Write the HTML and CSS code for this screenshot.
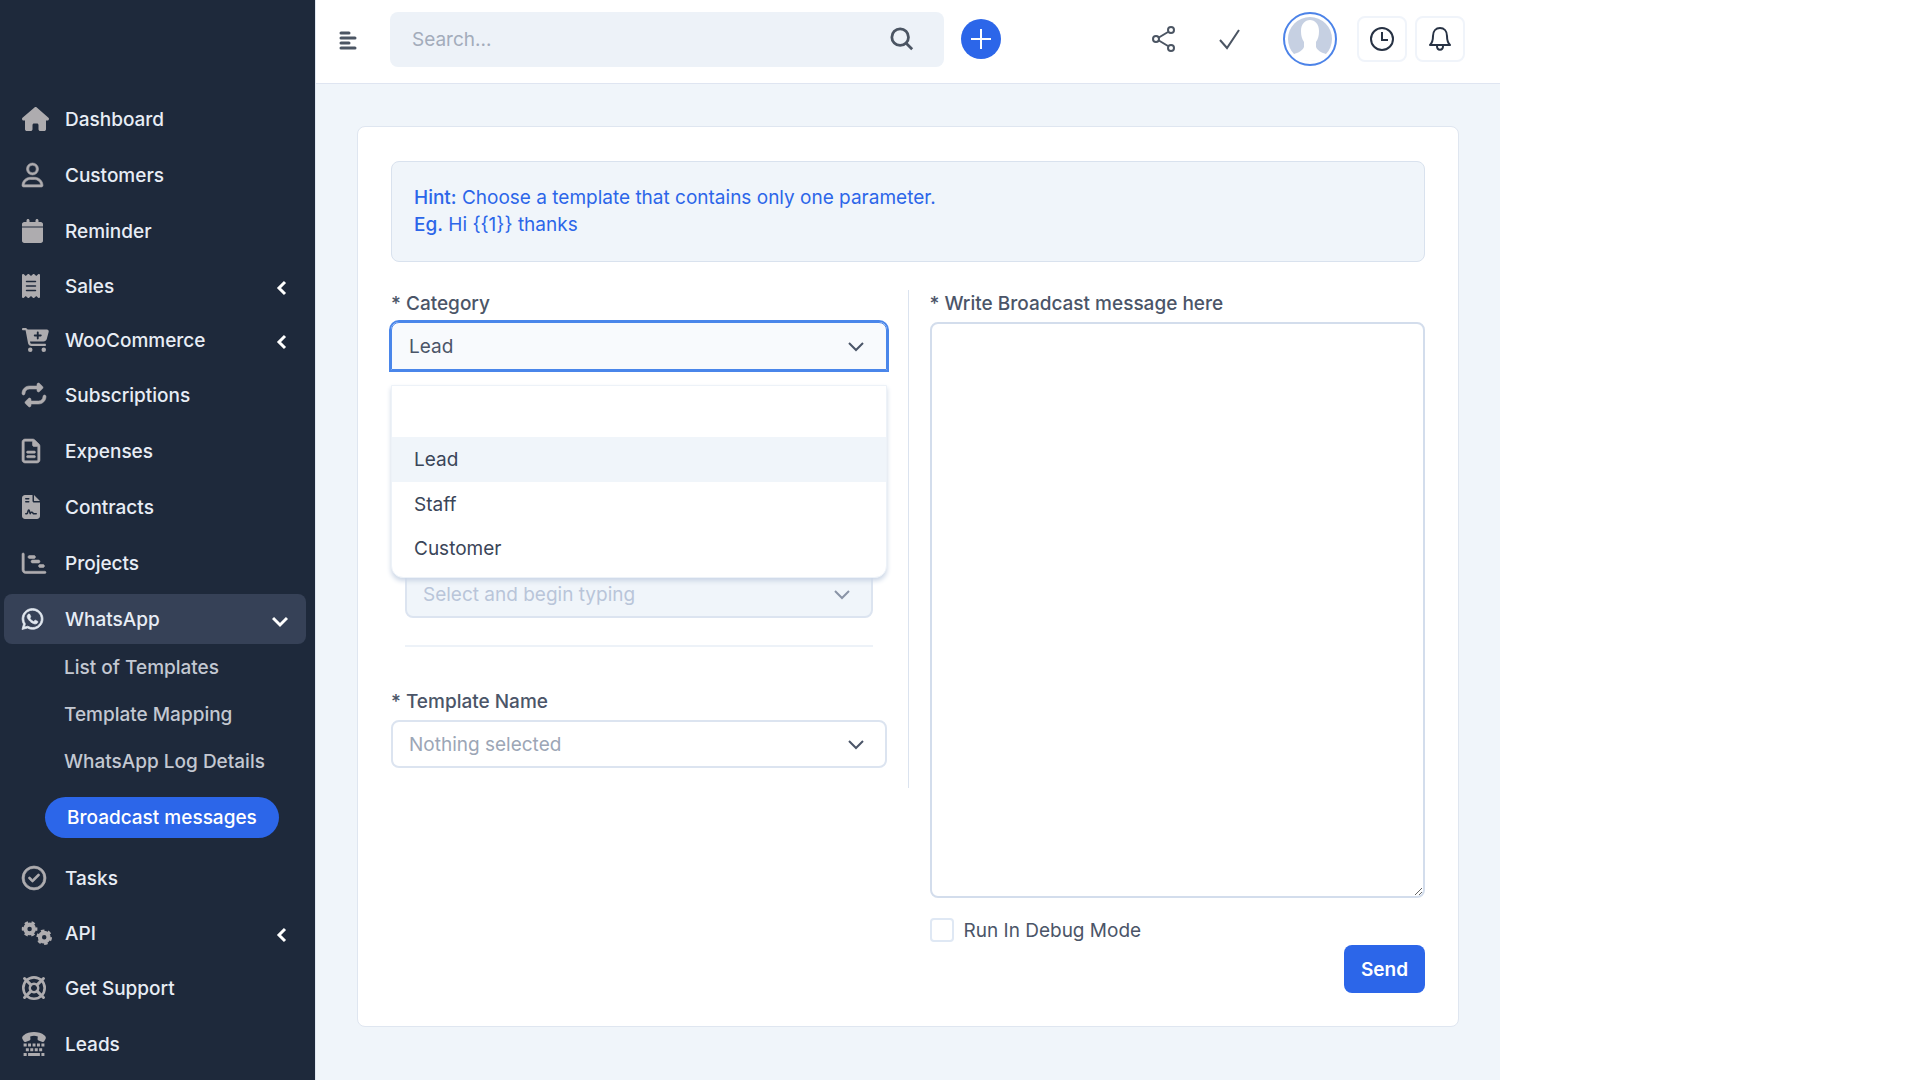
FILE: index.html
```html
<!DOCTYPE html>
<html lang="en">
<head>
<meta charset="utf-8">
<meta name="viewport" content="width=device-width, initial-scale=1">
<title>Broadcast messages</title>
<link rel="stylesheet" href="styles.css">
</head>
<body>
<div class="app">
  <aside class="sidebar">
    <nav aria-label="Main">
      <ul class="menu">
        <li><a class="menu-link" href="#"><svg class="menu-icon" viewBox="0 0 576 512"><path d="M575.8 255.5c0 18-15 32.1-32 32.1h-32l.7 160.2c0 2.7-.2 5.4-.5 8.1V472c0 22.1-17.9 40-40 40H456c-1.1 0-2.2 0-3.3-.1c-1.4 .1-2.8 .1-4.2 .1H416 392c-22.1 0-40-17.9-40-40V448 384c0-17.7-14.3-32-32-32H256c-17.7 0-32 14.3-32 32v64 24c0 22.1-17.9 40-40 40H160 128.1c-1.5 0-3-.1-4.5-.2c-1.2 .1-2.4 .2-3.6 .2H104c-22.1 0-40-17.9-40-40V360c0-.9 0-1.9 .1-2.8V287.6H32c-18 0-32-14-32-32.1c0-9 3-17 10-24L266.4 8c7-7 15-8 22-8s15 2 21 7L564.8 231.5c8 7 12 15 11 24z"/></svg><span>Dashboard</span></a></li>
        <li><a class="menu-link" href="#"><svg class="menu-icon" viewBox="0 0 448 512"><path stroke="currentColor" stroke-width="12" d="M304 128a80 80 0 1 0 -160 0 80 80 0 1 0 160 0zM96 128a128 128 0 1 1 256 0A128 128 0 1 1 96 128zM49.3 464H398.7c-8.9-63.3-63.3-112-129-112H178.3c-65.7 0-120.1 48.7-129 112zM0 482.3C0 383.8 79.8 304 178.3 304h91.4C368.2 304 448 383.8 448 482.3c0 16.4-13.3 29.7-29.7 29.7H29.7C13.3 512 0 498.7 0 482.3z"/></svg><span>Customers</span></a></li>
        <li><a class="menu-link" href="#"><svg class="menu-icon" viewBox="0 0 448 512"><path d="M96 32V64H48C21.5 64 0 85.5 0 112v48H448V112c0-26.5-21.5-48-48-48H352V32c0-17.7-14.3-32-32-32s-32 14.3-32 32V64H160V32c0-17.7-14.3-32-32-32S96 14.3 96 32zM448 180H0V464c0 26.5 21.5 48 48 48H400c26.5 0 48-21.5 48-48V180z"/></svg><span>Reminder</span></a></li>
        <li><a class="menu-link has-children" href="#"><svg class="menu-icon" viewBox="0 0 384 512"><path d="M14 2.2C22.5-1.7 32.5-.3 39.6 5.8L80 40.4 120.4 5.8c9-7.7 22.3-7.7 31.2 0L192 40.4 232.4 5.8c9-7.7 22.3-7.7 31.2 0L304 40.4 344.4 5.8c7.1-6.1 17.1-7.5 25.6-3.6s14 12.4 14 21.8V488c0 9.4-5.5 17.9-14 21.8s-18.5 2.5-25.6-3.6L304 471.6l-40.4 34.6c-9 7.7-22.3 7.7-31.2 0L192 471.6l-40.4 34.6c-9 7.7-22.3 7.7-31.2 0L80 471.6 39.6 506.2c-7.1 6.1-17.1 7.5-25.6 3.6S0 497.4 0 488V24C0 14.6 5.5 6.1 14 2.2zM96 144c-8.8 0-16 7.2-16 16s7.2 16 16 16H288c8.8 0 16-7.2 16-16s-7.2-16-16-16H96zM80 352c0 8.8 7.2 16 16 16H288c8.8 0 16-7.2 16-16s-7.2-16-16-16H96c-8.8 0-16 7.2-16 16zM96 240c-8.8 0-16 7.2-16 16s7.2 16 16 16H288c8.8 0 16-7.2 16-16s-7.2-16-16-16H96z"/></svg><span>Sales</span><svg class="arrow" viewBox="0 0 16 16"><path d="M11 2L5 8l6 6"/></svg></a></li>
        <li><a class="menu-link has-children" href="#"><svg class="menu-icon" viewBox="0 0 576 512"><path d="M0 24C0 10.7 10.7 0 24 0H69.5c22 0 41.5 12.8 50.6 32h411c26.3 0 45.5 25 38.6 50.4l-41 152.3c-8.5 31.4-37 53.3-69.5 53.3H170.7l5.4 28.5c2.2 11.3 12.1 19.5 23.6 19.5H488c13.3 0 24 10.7 24 24s-10.7 24-24 24H199.7c-34.6 0-64.3-24.6-70.7-58.5L77.4 54.5c-.7-3.8-4-6.5-7.9-6.5H24C10.7 48 0 37.3 0 24zM128 464a48 48 0 1 1 96 0 48 48 0 1 1 -96 0zm336-48a48 48 0 1 1 0 96 48 48 0 1 1 0-96zM252 160c0 11 9 20 20 20h44v44c0 11 9 20 20 20s20-9 20-20V180h44c11 0 20-9 20-20s-9-20-20-20H356V96c0-11-9-20-20-20s-20 9-20 20v44H272c-11 0-20 9-20 20z"/></svg><span>WooCommerce</span><svg class="arrow" viewBox="0 0 16 16"><path d="M11 2L5 8l6 6"/></svg></a></li>
        <li><a class="menu-link" href="#"><svg class="menu-icon" viewBox="0 0 512 512"><path stroke="currentColor" stroke-width="12" d="M0 224c0 17.7 14.3 32 32 32s32-14.3 32-32c0-53 43-96 96-96H320v32c0 12.9 7.8 24.6 19.8 29.6s25.7 2.2 34.9-6.9l64-64c12.5-12.5 12.5-32.8 0-45.3l-64-64c-9.2-9.2-22.9-11.9-34.9-6.9S320 19.1 320 32V64H160C71.6 64 0 135.6 0 224zm512 64c0-17.7-14.3-32-32-32s-32 14.3-32 32c0 53-43 96-96 96H192V352c0-12.9-7.8-24.6-19.8-29.6s-25.7-2.2-34.9 6.9l-64 64c-12.5 12.5-12.5 32.8 0 45.3l64 64c9.2 9.2 22.9 11.9 34.9 6.9s19.8-16.6 19.8-29.6V448H352c88.4 0 160-71.6 160-160z"/></svg><span>Subscriptions</span></a></li>
        <li><a class="menu-link" href="#"><svg class="menu-icon" viewBox="0 0 384 512"><path stroke="currentColor" stroke-width="12" d="M64 464c-8.8 0-16-7.2-16-16V64c0-8.8 7.2-16 16-16H224v80c0 17.7 14.3 32 32 32h80V448c0 8.8-7.2 16-16 16H64zM64 0C28.7 0 0 28.7 0 64V448c0 35.3 28.7 64 64 64H320c35.3 0 64-28.7 64-64V154.5c0-17-6.7-33.3-18.7-45.3L274.7 18.7C262.7 6.7 246.5 0 229.5 0H64zm56 256c-13.3 0-24 10.7-24 24s10.7 24 24 24H264c13.3 0 24-10.7 24-24s-10.7-24-24-24H120zm0 96c-13.3 0-24 10.7-24 24s10.7 24 24 24H264c13.3 0 24-10.7 24-24s-10.7-24-24-24H120z"/></svg><span>Expenses</span></a></li>
        <li><a class="menu-link" href="#"><svg class="menu-icon" viewBox="0 0 384 512"><path d="M64 0C28.7 0 0 28.7 0 64V448c0 35.3 28.7 64 64 64H320c35.3 0 64-28.7 64-64V160H256c-17.7 0-32-14.3-32-32V0H64zM256 0V128H384L256 0zM80 64h64c8.8 0 16 7.2 16 16s-7.2 16-16 16H80c-8.8 0-16-7.2-16-16s7.2-16 16-16zm0 64h64c8.8 0 16 7.2 16 16s-7.2 16-16 16H80c-8.8 0-16-7.2-16-16s7.2-16 16-16zm54.2 253.8c-6.1 20.3-24.8 34.2-46 34.2H80c-8.8 0-16-7.2-16-16s7.2-16 16-16h8.2c7.1 0 13.3-4.6 15.3-11.4l14.9-49.5c3.4-11.3 13.8-19.1 25.6-19.1s22.2 7.7 25.6 19.1l11.6 38.6c7.4-6.2 16.8-9.7 26.8-9.7c15.9 0 30.4 9 37.5 23.2l4.4 8.8H304c8.8 0 16 7.2 16 16s-7.2 16-16 16H240c-6.1 0-11.6-3.4-14.3-8.8l-8.8-17.7c-1.7-3.4-5.1-5.5-8.8-5.5s-7.2 2.1-8.8 5.5l-8.8 17.7c-2.9 5.9-9.2 9.4-15.7 8.8s-12.1-5.1-13.9-11.3L144 349l-9.8 32.8z"/></svg><span>Contracts</span></a></li>
        <li><a class="menu-link" href="#"><svg class="menu-icon" viewBox="0 0 512 512"><path stroke="currentColor" stroke-width="12" d="M24 40c13 0 24 11 24 24V400c0 18 14 32 32 32H488c13 0 24 11 24 24s-11 24-24 24H80c-44.2 0-80-35.8-80-80V64C0 51 11 40 24 40zM128 128c0-17.7 14.3-32 32-32h96c17.7 0 32 14.3 32 32s-14.3 32-32 32H160c-17.7 0-32-14.3-32-32zm96 64H352c17.7 0 32 14.3 32 32s-14.3 32-32 32H224c-17.7 0-32-14.3-32-32s14.3-32 32-32zm160 96h64c17.7 0 32 14.3 32 32s-14.3 32-32 32H384c-17.7 0-32-14.3-32-32s14.3-32 32-32z"/></svg><span>Projects</span></a></li>
        <li>
          <a class="menu-link is-open" href="#" aria-expanded="true"><svg class="menu-icon" viewBox="0 0 448 512"><path stroke="currentColor" stroke-width="16" d="M380.9 97.1C339 55.1 283.2 32 223.9 32c-122.4 0-222 99.6-222 222 0 39.1 10.2 77.3 29.6 111L0 480l117.7-30.9c32.4 17.7 68.9 27 106.1 27h.1c122.3 0 224.1-99.6 224.1-222 0-59.3-25.2-115-67.1-157zm-157 341.6c-33.2 0-65.7-8.9-94-25.7l-6.7-4-69.8 18.3L72 359.2l-4.4-7c-18.5-29.4-28.2-63.3-28.2-98.2 0-101.7 82.8-184.5 184.6-184.5 49.3 0 95.6 19.2 130.4 54.1 34.8 34.9 56.2 81.2 56.1 130.5 0 101.8-84.9 184.6-186.6 184.6zm101.2-138.2c-5.5-2.8-32.8-16.2-37.9-18-5.1-1.9-8.8-2.8-12.5 2.8-3.7 5.6-14.3 18-17.6 21.8-3.2 3.7-6.5 4.2-12 1.4-32.6-16.3-54-29.1-75.5-66-5.7-9.8 5.7-9.1 16.3-30.3 1.8-3.7.9-6.9-.5-9.7-1.4-2.8-12.5-30.1-17.1-41.2-4.5-10.8-9.1-9.3-12.5-9.5-3.2-.2-6.9-.2-10.6-.2-3.7 0-9.7 1.4-14.8 6.9-5.1 5.6-19.4 19-19.4 46.3 0 27.3 19.9 53.7 22.6 57.4 2.8 3.7 39.1 59.7 94.8 83.8 35.2 15.2 49 16.5 66.6 13.9 10.7-1.6 32.8-13.4 37.4-26.4 4.6-13 4.6-24.1 3.2-26.4-1.3-2.5-5-3.9-10.5-6.6z"/></svg><span>WhatsApp</span><svg class="arrow" viewBox="0 0 16 16"><path d="M1 5l7 7 7-7"/></svg></a>
          <ul class="submenu">
            <li><a class="sub-link" href="#">List of Templates</a></li>
            <li><a class="sub-link" href="#">Template Mapping</a></li>
            <li><a class="sub-link" href="#">WhatsApp Log Details</a></li>
            <li><a class="sub-link is-current" href="#" aria-current="page">Broadcast messages</a></li>
          </ul>
        </li>
        <li><a class="menu-link" href="#"><svg class="menu-icon" viewBox="0 0 512 512"><path stroke="currentColor" stroke-width="14" d="M256 48a208 208 0 1 1 0 416 208 208 0 1 1 0-416zm0 464A256 256 0 1 0 256 0a256 256 0 1 0 0 512zM369 209c9.4-9.4 9.4-24.6 0-33.9s-24.6-9.4-33.9 0l-111 111-47-47c-9.4-9.4-24.6-9.4-33.9 0s-9.4 24.6 0 33.9l64 64c9.4 9.4 24.6 9.4 33.9 0L369 209z"/></svg><span>Tasks</span></a></li>
        <li><a class="menu-link has-children" href="#"><svg class="menu-icon" viewBox="0 0 640 512"><g fill="none" stroke="currentColor"><circle cx="162" cy="168" r="92" stroke-width="88"/><circle cx="162" cy="168" r="140" stroke-width="54" pathLength="12" stroke-dasharray="1 1" stroke-dashoffset="0.5"/><circle cx="474" cy="346" r="92" stroke-width="88"/><circle cx="474" cy="346" r="140" stroke-width="54" pathLength="12" stroke-dasharray="1 1"/></g></svg><span>API</span><svg class="arrow" viewBox="0 0 16 16"><path d="M11 2L5 8l6 6"/></svg></a></li>
        <li><a class="menu-link" href="#"><svg class="menu-icon" viewBox="0 0 512 512"><g fill="none" stroke="currentColor"><circle cx="256" cy="256" r="228" stroke-width="56"/><circle cx="256" cy="256" r="90" stroke-width="52"/><path stroke-width="64" stroke-linecap="round" d="M54 54l136 136M458 54L322 190M54 458l136-136M458 458L322 322"/></g></svg><span>Get Support</span></a></li>
        <li><a class="menu-link" href="#"><svg class="menu-icon" viewBox="0 0 512 512"><path d="M38 198L10 150C-6 120 6 92 30 72C155-22 357-22 482 72c24 20 36 48 20 78l-28 48c-8 14-22 19-37 14l-84-32c-14-6-22-18-21-32l5-52c-50-18-112-18-162 0l5 52c1 14-7 26-21 32l-84 32c-15 5-29 0-37-14z"/><path d="M34 246h66v64H34zM130 246h62v64h-62zM226 246h62v64h-62zM320 246h62v64h-62zM414 246h64v64h-64zM82 348h64v64H82zM176 348h64v64h-64zM272 348h64v64h-64zM366 348h64v64h-64zM34 450h66v62H34zM130 450h252v62H130zM414 450h64v62h-64z"/></svg><span>Leads</span></a></li>
      </ul>
    </nav>
  </aside>

  <div class="page">
    <header class="topbar">
      <button class="plain-btn menu-toggle" type="button" aria-label="Toggle menu"><svg width="18" height="20" viewBox="0 0 18 20"><path d="M2 2h8M2 7h14M2 12h8M2 17h14" fill="none" stroke="#4b5563" stroke-width="3" stroke-linecap="round"/></svg></button>
      <form class="search" role="search">
        <input class="search-input" type="search" placeholder="Search..." aria-label="Search">
        <button class="plain-btn" type="button" aria-label="Search"><svg width="24" height="24" viewBox="0 0 26 26"><g fill="none" stroke="#4b5563" stroke-width="3"><circle cx="11" cy="11" r="9"/><path d="M17 17l7 7"/></g></svg></button>
      </form>
      <button class="add-btn" type="button" aria-label="Add"><svg width="20" height="20" viewBox="0 0 20 20"><path d="M10 0v20M0 10h20" stroke="#fff" stroke-width="2"/></svg></button>
      <div class="tools">
        <button class="plain-btn tool" type="button" aria-label="Share"><svg width="26" height="28" viewBox="0 0 26 28"><g fill="none" stroke="#4b5563" stroke-width="2"><circle cx="5" cy="14" r="3"/><circle cx="20" cy="5" r="3"/><circle cx="20" cy="23" r="3"/><path d="M7 13L17 7M7 15l10 6"/></g></svg></button>
        <button class="plain-btn tool" type="button" aria-label="To do"><svg width="22" height="22" viewBox="0 0 22 22"><path d="M1 12l7 8L20 2" fill="none" stroke="#4b5563" stroke-width="2"/></svg></button>
        <button class="plain-btn avatar" type="button" aria-label="Profile"><svg width="54" height="54" viewBox="0 0 54 54"><circle cx="27" cy="27" r="26" fill="#fff" stroke="#4c83e8" stroke-width="2"/><circle cx="27" cy="27" r="22" fill="#c6d0e2"/><path d="M18 19c0-7 4-11 9-11s9 4 9 11c0 5-1 8-3 11v5c2 5 8 6 12 8-5 4-11 6-18 6s-13-2-18-6c4-2 10-3 12-8v-5c-2-3-3-6-3-11z" fill="#fff"/></svg></button>
        <button class="box-btn" type="button" aria-label="Timers"><svg width="24" height="24" viewBox="0 0 24 24"><g fill="none" stroke="#273244" stroke-width="2"><circle cx="12" cy="12" r="11"/><path d="M12 5v8h6"/></g></svg></button>
        <button class="box-btn" type="button" aria-label="Notifications"><svg width="24" height="26" viewBox="0 0 24 26"><g fill="none" stroke="#273244" stroke-width="2" stroke-linejoin="round"><path d="M2 19c3-3 3-6 3-9 0-5 3-8 7-8s7 3 7 8c0 3 0 6 3 9z"/><path d="M9 20c0 5 6 5 6 0"/></g></svg></button>
      </div>
    </header>

    <main class="content">
      <form class="card">
        <div class="hint">
          <strong>Hint:</strong> Choose a template that contains only one parameter.<br>
          <strong>Eg.</strong> Hi {{1}} thanks
        </div>
        <div class="columns">
          <div class="left">
            <div class="fields">
              <div class="field">
                <label for="category">* Category</label>
                <div class="select-box is-focused">
                  <select id="category"><option>Lead</option><option>Staff</option><option>Customer</option></select>
                  <svg class="caret" viewBox="0 0 16 10"><path d="M1 1l7 7 7-7"/></svg>
                  <ul class="options">
                    <li class="blank"><button type="button" aria-label="None"></button></li>
                    <li><button class="is-active" type="button">Lead</button></li>
                    <li><button type="button">Staff</button></li>
                    <li><button type="button">Customer</button></li>
                  </ul>
                </div>
              </div>
              <div class="recipients">
                <div class="select-box">
                  <select aria-label="Recipients" disabled><option>Select and begin typing</option></select>
                  <svg class="caret" viewBox="0 0 16 10"><path d="M1 1l7 7 7-7"/></svg>
                </div>
              </div>
              <div class="field">
                <label for="template">* Template Name</label>
                <div class="select-box is-empty">
                  <select id="template"><option>Nothing selected</option></select>
                  <svg class="caret" viewBox="0 0 16 10"><path d="M1 1l7 7 7-7"/></svg>
                </div>
              </div>
            </div>
          </div>
          <div class="right">
            <div class="field">
              <label for="message">* Write Broadcast message here</label>
              <textarea id="message" rows="20"></textarea>
            </div>
            <div class="debug"><input id="debug" type="checkbox"><label for="debug">Run In Debug Mode</label></div>
            <button class="send" type="submit">Send</button>
          </div>
        </div>
      </form>
    </main>
  </div>
</div>
</body>
</html>
```
FILE: styles.css
```css
* {
  box-sizing: border-box;
}

body {
  margin: 0;
  background: #fff;
  color: #4b5568;
  font: 400 19px/27px Inter, "Liberation Sans", sans-serif;
}

ul {
  margin: 0;
  padding: 0;
  list-style: none;
}

a {
  color: inherit;
  text-decoration: none;
}

button,
input,
select,
textarea {
  font: inherit;
  color: inherit;
}

svg {
  display: block;
}

.app {
  display: flex;
  min-height: 100vh;
  margin-right: 420px;
}

/* Sidebar */
.sidebar {
  flex: none;
  width: 315px;
  padding: 94px 9px 0 4px;
  background: #1e293b;
  color: #e8edf5;
}

.menu {
  display: flex;
  flex-direction: column;
  gap: 6px;
}

.menu-link {
  display: grid;
  grid-template-columns: 43px 1fr auto;
  align-items: center;
  height: 50px;
  padding: 0 18px;
  border-radius: 8px;
  font-weight: 500;
}

.menu-link.has-children {
  height: 48px;
  padding-right: 16px;
}

.menu-link.is-open {
  background: #364157;
}

.menu-icon {
  height: 24px;
  overflow: visible;
  fill: currentColor;
  color: #aeacaf;
}

.is-open .menu-icon {
  color: #e2e8f0;
}

.arrow {
  width: 16px;
  height: 16px;
  margin-top: 3px;
  fill: none;
  stroke: #fff;
  stroke-width: 3;
}

.submenu {
  display: flex;
  flex-direction: column;
  align-items: flex-start;
  padding-bottom: 9px;
}

.sub-link {
  display: block;
  padding: 10px 0 10px 60px;
  color: #c3c8d2;
  font-weight: 500;
  white-space: nowrap;
}

.sub-link.is-current {
  margin: 12px 0 0 41px;
  padding: 7px 22px;
  border-radius: 21px;
  background: #2c66e9;
  color: #fff;
}

/* Top bar */
.page {
  display: flex;
  flex: 1;
  flex-direction: column;
  min-width: 0;
  border-left: 1px solid #dfe6f0;
  background: #f0f5fa;
}

.topbar {
  display: flex;
  align-items: center;
  height: 84px;
  padding: 0 35px 5px 23px;
  border-bottom: 1px solid #dfe5f1;
  background: #fff;
}

.plain-btn {
  padding: 0;
  border: 0;
  background: none;
}

.menu-toggle {
  padding-top: 4px;
}

.search {
  display: flex;
  flex: 1;
  align-items: center;
  max-width: 554px;
  height: 55px;
  margin-left: 33px;
  padding: 0 30px 0 22px;
  border-radius: 8px;
  background: #edf2f8;
}

.search-input {
  flex: 1;
  min-width: 0;
  padding: 0;
  border: 0;
  background: none;
  outline: none;
}

.search-input::placeholder {
  color: #a3acbb;
}

.add-btn {
  display: grid;
  place-items: center;
  width: 40px;
  height: 40px;
  margin-left: 17px;
  padding: 0;
  border: 0;
  border-radius: 50%;
  background: #2c66e9;
}

.tools {
  display: flex;
  align-items: center;
  margin-left: auto;
}

.tool {
  display: grid;
  place-items: center;
  width: 66px;
  height: 40px;
}

.avatar {
  margin: 0 20px;
}

.box-btn {
  display: grid;
  place-items: center;
  width: 50px;
  height: 46px;
  padding: 0;
  border: 2px solid #f0f4fa;
  border-radius: 8px;
  background: #fff;
}

.box-btn + .box-btn {
  margin-left: 8px;
}

/* Form card */
.content {
  padding: 42px 41px 52px;
}

.card {
  padding: 34px 33px 33px;
  border: 1px solid #dfe6f0;
  border-radius: 8px;
  background: #fff;
}

.hint {
  padding: 22px 22px 23px;
  border: 1px solid #d9e2ee;
  border-radius: 8px;
  background: #f0f5fa;
  color: #2c66e9;
}

.hint strong {
  font-weight: 500;
}

.columns {
  display: flex;
  gap: 21px;
  margin-top: 28px;
}

.left {
  flex: 1 1 22px;
  min-width: 0;
}

.right {
  display: flex;
  flex: 1 1 0;
  flex-direction: column;
  min-width: 0;
}

.fields {
  padding: 0 21px 20px 0;
  border-right: 1px solid #dbe3ef;
}

.field {
  display: flex;
  flex-direction: column;
  gap: 5px;
}

.field > label {
  line-height: 27px;
  font-weight: 500;
}

.select-box {
  position: relative;
}

select {
  display: block;
  width: 100%;
  height: 48px;
  padding: 0 40px 0 16px;
  border: 2px solid #dce4f0;
  border-radius: 8px;
  background: #fff;
  appearance: none;
}

select:disabled {
  background: #f0f5fa;
  color: #b9c5d9;
  opacity: 1;
}

.is-empty select {
  color: #9ca6b6;
}

.is-focused select {
  padding-left: 17px;
  border: 1px solid #4a86ea;
  border-radius: 8px 8px 0 0;
  outline: 2px solid #4a86ea;
  background: #f8fafd;
}

.caret {
  position: absolute;
  top: 20px;
  right: 23px;
  width: 16px;
  height: 10px;
  fill: none;
  stroke: #4b5568;
  stroke-width: 2;
}

.options {
  position: absolute;
  z-index: 1;
  top: 63px;
  right: 0;
  left: 0;
  padding-bottom: 7px;
  overflow: hidden;
  border: 1px solid #edf2f8;
  border-radius: 0 0 12px 12px;
  background: #fff;
  box-shadow: 0 3px 5px 0 #cbd6e6;
}

.options button {
  display: block;
  width: 100%;
  height: 44px;
  padding: 0 22px;
  border: 0;
  background: none;
  color: #3a4558;
  text-align: left;
}

.options .blank {
  padding-top: 7px;
}

.options .is-active {
  height: 45px;
  background: #f0f5fa;
}

.recipients {
  margin: 200px 14px 41px;
  padding-bottom: 27px;
  border-bottom: 2px solid #edf2f8;
}

.recipients .caret {
  stroke: #8a94a6;
}

textarea {
  display: block;
  width: 100%;
  padding: 6px 16px;
  border: 2px solid #d3ddec;
  border-radius: 8px;
  background: #fff;
  line-height: 28px;
  resize: both;
}

.debug {
  display: flex;
  align-items: center;
  gap: 10px;
  height: 24px;
  margin-top: 20px;
}

.debug input {
  width: 24px;
  height: 24px;
  margin: 0;
  border: 2px solid #dfe8f4;
  border-radius: 4px;
  background: #fff;
  appearance: none;
}

.send {
  align-self: flex-end;
  height: 48px;
  margin-top: 3px;
  padding: 0 17px;
  border: 0;
  border-radius: 8px;
  background: #2c66e9;
  color: #fff;
  font-weight: 600;
}
```
